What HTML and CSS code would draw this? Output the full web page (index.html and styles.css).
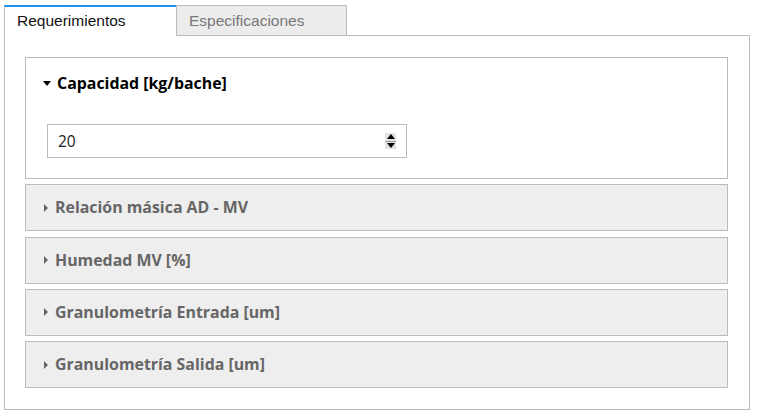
FILE: index.html
```html
<!DOCTYPE html>
<html lang="es">
<head>
<meta charset="utf-8">
<title>Requerimientos</title>
<link rel="stylesheet" href="styles.css">
</head>
<body>
<div class="tabs">
  <div class="tab-bar">
    <div class="tab active">Requerimientos</div>
    <div class="tab">Especificaciones</div>
  </div>
  <div class="panel">
    <div class="card open">
      <div class="card-head">
        <span class="caret down"></span>
        <span class="title">Capacidad [kg/bache]</span>
      </div>
      <div class="card-body">
        <div class="num-input">
          <span class="value">20</span>
          <span class="spin">
            <span class="spin-up"></span>
            <span class="spin-down"></span>
          </span>
        </div>
      </div>
    </div>
    <div class="card closed">
      <div class="card-head">
        <span class="caret right"></span>
        <span class="title">Relación másica AD - MV</span>
      </div>
    </div>
    <div class="card closed">
      <div class="card-head">
        <span class="caret right"></span>
        <span class="title">Humedad MV [%]</span>
      </div>
    </div>
    <div class="card closed">
      <div class="card-head">
        <span class="caret right"></span>
        <span class="title">Granulometría Entrada [um]</span>
      </div>
    </div>
    <div class="card closed">
      <div class="card-head">
        <span class="caret right"></span>
        <span class="title">Granulometría Salida [um]</span>
      </div>
    </div>
  </div>
</div>
</body>
</html>
```

FILE: styles.css
```css
html, body {
  margin: 0;
  padding: 0;
  background: #fff;
}

.tabs {
  margin: 5px 0 0 4px;
  width: 746px;
}

.tab-bar {
  display: flex;
  height: 30px;
}

.tab {
  box-sizing: border-box;
  height: 30px;
  padding: 0 0 0 12px;
  font-family: "Liberation Sans", Arial, sans-serif;
  font-size: 15.5px;
  line-height: 30px;
  color: #777;
  background: #ececec;
  border: 1px solid #bbb;
  border-bottom: none;
  width: 171px;
}

.tab.active {
  width: 172px;
  color: #111;
  background: #fff;
  border: none;
  border-top: 2px solid #1e90e8;
  border-left: 1px solid #bbb;
  line-height: 27px;
  position: relative;
  z-index: 1;
  height: 31px;
  margin-bottom: -1px;
}

.panel {
  box-sizing: border-box;
  border: 1px solid #bbb;
  padding: 21px 21px 21px 20px;
  display: flex;
  flex-direction: column;
  gap: 5.3px;
}

.card {
  border: 1px solid #bbb;
  font-family: "Open Sans", "Noto Sans", sans-serif;
}

.card.closed {
  background: #eeeeee;
}

.card-head {
  display: flex;
  align-items: center;
  font-weight: 700;
  font-size: 15.9px;
  line-height: 21px;
  padding: 12px 18px 12px 18px;
}

.card.open .card-head {
  padding: 15px 18px 15px 17px;
  color: #000;
}

.card.closed .card-head {
  color: #666;
}

.caret {
  display: inline-block;
  width: 0;
  height: 0;
}

.caret.down {
  border-left: 4px solid transparent;
  border-right: 4px solid transparent;
  border-top: 5px solid #000;
  margin-right: 6px;
}

.caret.right {
  border-top: 4px solid transparent;
  border-bottom: 4px solid transparent;
  border-left: 4px solid #666;
  margin-left: 0;
  margin-right: 7px;
}

.card-body {
  padding: 15px 21px 20px;
}

.num-input {
  box-sizing: border-box;
  width: 360px;
  height: 34px;
  border: 1px solid #bbb;
  display: flex;
  align-items: center;
  justify-content: space-between;
  padding: 0 10px 0 10px;
  font-family: "Open Sans", "Noto Sans", sans-serif;
  font-size: 15.5px;
  color: #1a1a1a;
}

.spin {
  display: flex;
  flex-direction: column;
  width: 11px;
  height: 16px;
  background: #e2e2e2;
}

.spin-up, .spin-down {
  flex: 1;
  display: flex;
  align-items: center;
  justify-content: center;
}

.spin-up {
  border-bottom: 1px solid #999;
}

.spin-up::before {
  content: "";
  border-left: 4px solid transparent;
  border-right: 4px solid transparent;
  border-bottom: 5px solid #000;
}

.spin-down::before {
  content: "";
  border-left: 4px solid transparent;
  border-right: 4px solid transparent;
  border-top: 5px solid #000;
}
```
